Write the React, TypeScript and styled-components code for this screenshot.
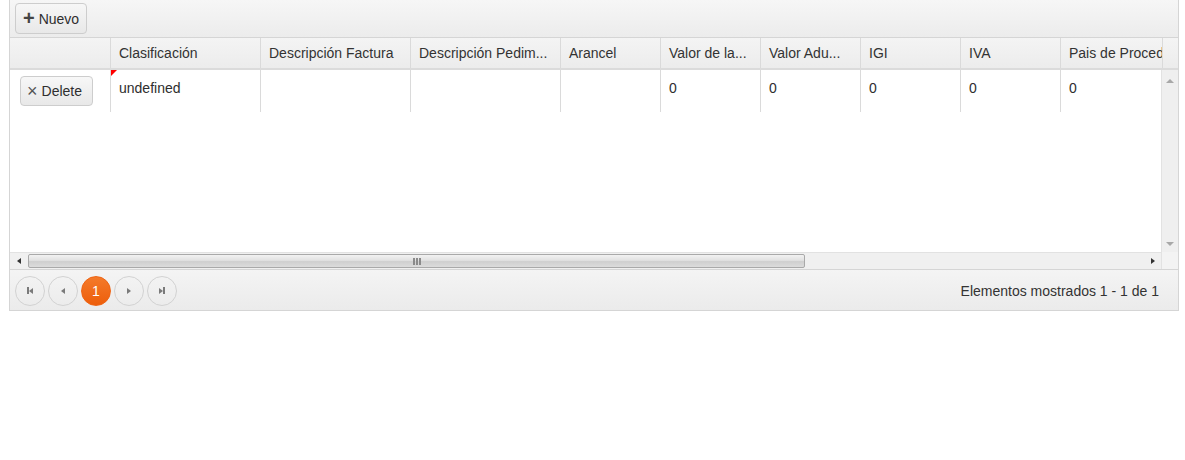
import React from 'react';
import styled, { createGlobalStyle } from 'styled-components';

const GlobalStyle = createGlobalStyle`
  html, body {
    margin: 0;
    padding: 0;
    background: #fff;
    font-family: "Liberation Sans", Arial, sans-serif;
    font-size: 14px;
    color: #2e2e2e;
  }
`;

type Column = { title: string; width: number; field?: string };

const columns: Column[] = [
  { title: '', width: 100 },
  { title: 'Clasificación', width: 150, field: 'clasificacion' },
  { title: 'Descripción Factura', width: 150, field: 'descFactura' },
  { title: 'Descripción Pedim...', width: 150, field: 'descPedimento' },
  { title: 'Arancel', width: 100, field: 'arancel' },
  { title: 'Valor de la...', width: 100, field: 'valorFactura' },
  { title: 'Valor Adu...', width: 100, field: 'valorAduana' },
  { title: 'IGI', width: 100, field: 'igi' },
  { title: 'IVA', width: 100, field: 'iva' },
  { title: 'Pais de Procedencia', width: 150, field: 'pais' },
];

const rows: Record<string, string>[] = [
  {
    clasificacion: 'undefined',
    descFactura: '',
    descPedimento: '',
    arancel: '',
    valorFactura: '0',
    valorAduana: '0',
    igi: '0',
    iva: '0',
    pais: '0',
  },
];

const App = () => {
  return (
    <Page>
      <GlobalStyle />
      <Grid>
        <Toolbar>
          <Button>
            <Plus>+</Plus> Nuevo
          </Button>
        </Toolbar>

        <HeaderWrap>
          <HeaderRow>
            {columns.map((c, i) => (
              <HeaderCell key={i} $width={c.width}>
                {c.title}
              </HeaderCell>
            ))}
          </HeaderRow>
          <HeaderGutter />
        </HeaderWrap>

        <ContentArea>
          <ContentMain>
            <Rows>
              {rows.map((r, ri) => (
                <Row key={ri}>
                  {columns.map((c, i) =>
                    i === 0 ? (
                      <CommandCell key={i} $width={c.width}>
                        <Button $small>
                          <Cross>×</Cross> Delete
                        </Button>
                      </CommandCell>
                    ) : (
                      <Cell key={i} $width={c.width} $dirty={c.field === 'clasificacion'}>
                        {r[c.field!]}
                      </Cell>
                    )
                  )}
                </Row>
              ))}
            </Rows>
            <HScroll>
              <ArrowBtn>
                <Tri $dir="left" />
              </ArrowBtn>
              <HTrack>
                <HThumb>
                  <Grip>
                    <i />
                    <i />
                    <i />
                  </Grip>
                </HThumb>
              </HTrack>
              <ArrowBtn>
                <Tri $dir="right" />
              </ArrowBtn>
            </HScroll>
          </ContentMain>
          <VScroll>
            <VArrow>
              <Tri $dir="up" />
            </VArrow>
            <VArrow>
              <Tri $dir="down" />
            </VArrow>
            <Corner />
          </VScroll>
        </ContentArea>

        <Pager>
          <PagerNav>
            <PageBtn aria-label="first">
              <Bar />
              <Tri $dir="left" $small />
            </PageBtn>
            <PageBtn aria-label="prev">
              <Tri $dir="left" $small />
            </PageBtn>
            <PageBtn $active>1</PageBtn>
            <PageBtn aria-label="next">
              <Tri $dir="right" $small />
            </PageBtn>
            <PageBtn aria-label="last">
              <Tri $dir="right" $small />
              <Bar />
            </PageBtn>
          </PagerNav>
          <PagerInfo>Elementos mostrados 1 - 1 de 1</PagerInfo>
        </Pager>
      </Grid>
    </Page>
  );
};

const Page = styled.div`
  padding: 0 6px 0 9px;
`;

const Grid = styled.div`
  width: 1170px;
  box-sizing: border-box;
  border: 1px solid #d5d5d5;
  border-top: none;
  background: #fff;
`;

const Toolbar = styled.div`
  height: 38px;
  box-sizing: border-box;
  padding: 3px 5px;
  background: linear-gradient(#f6f6f6, #ececec);
  border-bottom: 1px solid #d5d5d5;
  display: flex;
  align-items: flex-start;
`;

const Button = styled.button<{ $small?: boolean }>`
  height: 31px;
  padding: 0 7px;
  box-sizing: border-box;
  border: 1px solid #cdcdcd;
  border-radius: 4px;
  background: linear-gradient(#f7f7f7, #e8e8e8);
  font-family: "Liberation Sans", Arial, sans-serif;
  font-size: 14px;
  color: #2e2e2e;
  display: inline-flex;
  align-items: center;
  gap: 4px;
  cursor: pointer;
  ${(p) => (p.$small ? 'width: 73px; height: 30px; padding: 0 6px;' : 'width: 72px;')}
`;

const Plus = styled.span`
  font-size: 20px;
  font-weight: bold;
  line-height: 1;
  margin-top: -2px;
  color: #444;
`;

const Cross = styled.span`
  font-size: 18px;
  line-height: 1;
  color: #555;
  margin-top: -1px;
`;

const HeaderWrap = styled.div`
  display: flex;
  height: 32px;
  box-sizing: border-box;
  border-bottom: 2px solid #dbdbdb;
  background: linear-gradient(#f4f4f4, #ececec);
  overflow: hidden;
`;

const HeaderRow = styled.div`
  flex: 1;
  display: flex;
  overflow: hidden;
`;

const HeaderGutter = styled.div`
  width: 15px;
  flex: none;
  border-left: 1px solid #dadada;
`;

const HeaderCell = styled.div<{ $width: number }>`
  flex: none;
  width: ${(p) => p.$width}px;
  box-sizing: border-box;
  padding: 0 8px;
  line-height: 30px;
  white-space: nowrap;
  overflow: hidden;
  border-left: 1px solid #dadada;
  color: #333;
  &:first-child {
    border-left: none;
  }
`;

const ContentArea = styled.div`
  display: flex;
  height: 199px;
`;

const ContentMain = styled.div`
  flex: 1;
  min-width: 0;
  display: flex;
  flex-direction: column;
`;

const Rows = styled.div`
  flex: 1;
  overflow: hidden;
`;

const Row = styled.div`
  display: flex;
  height: 42px;
`;

const Cell = styled.div<{ $width: number; $dirty?: boolean }>`
  flex: none;
  position: relative;
  width: ${(p) => p.$width}px;
  box-sizing: border-box;
  padding: 10px 8px 0;
  white-space: nowrap;
  overflow: hidden;
  border-left: 1px solid #dadada;
  ${(p) =>
    p.$dirty &&
    `
    &::before {
      content: '';
      position: absolute;
      left: 0;
      top: 0;
      border-style: solid;
      border-width: 6px 6px 0 0;
      border-color: #f00 transparent transparent transparent;
    }
  `}
`;

const CommandCell = styled.div<{ $width: number }>`
  flex: none;
  width: ${(p) => p.$width}px;
  box-sizing: border-box;
  padding: 6px 0 0 10px;
`;

const HScroll = styled.div`
  height: 17px;
  box-sizing: border-box;
  display: flex;
  align-items: center;
  background: #f0f0f0;
  border-top: 1px solid #e2e2e2;
`;

const ArrowBtn = styled.div`
  width: 17px;
  height: 16px;
  flex: none;
  display: flex;
  align-items: center;
  justify-content: center;
`;

const HTrack = styled.div`
  flex: 1;
  height: 16px;
  display: flex;
  align-items: center;
`;

const HThumb = styled.div`
  margin-left: 1px;
  width: 777px;
  height: 14px;
  box-sizing: border-box;
  border: 1px solid #a9a9a9;
  border-radius: 2px;
  background: linear-gradient(#f2f2f2, #e1e1e1 45%, #cfcfcf 55%, #dcdcdc);
  display: flex;
  align-items: center;
  justify-content: center;
`;

const Grip = styled.div`
  display: flex;
  gap: 1px;
  i {
    width: 2px;
    height: 7px;
    background: #8a8a8a;
  }
`;

const VScroll = styled.div`
  width: 16px;
  flex: none;
  display: flex;
  flex-direction: column;
  background: #efefef;
  border-left: 1px solid #e2e2e2;
`;

const VArrow = styled.div`
  height: 17px;
  display: flex;
  align-items: center;
  justify-content: center;
  &:first-child {
    flex: none;
    padding-top: 2px;
  }
  &:nth-child(2) {
    margin-top: auto;
  }
`;

const Corner = styled.div`
  height: 17px;
  background: #f3f3f3;
`;

const Tri = styled.span<{ $dir: 'left' | 'right' | 'up' | 'down'; $small?: boolean }>`
  display: inline-block;
  width: 0;
  height: 0;
  border-style: solid;
  ${(p) => {
    const c = p.$small ? '#7a7a7a' : '#333';
    switch (p.$dir) {
      case 'left':
        return `border-width: 3px 4px 3px 0; border-color: transparent ${c} transparent transparent;`;
      case 'right':
        return `border-width: 3px 0 3px 4px; border-color: transparent transparent transparent ${c};`;
      case 'up':
        return `border-width: 0 4px 4px 4px; border-color: transparent transparent #a8a8a8 transparent;`;
      default:
        return `border-width: 4px 4px 0 4px; border-color: #a8a8a8 transparent transparent transparent;`;
    }
  }}
`;

const Bar = styled.span`
  display: inline-block;
  width: 2px;
  height: 7px;
  background: #7a7a7a;
`;

const Pager = styled.div`
  height: 41px;
  box-sizing: border-box;
  display: flex;
  align-items: center;
  justify-content: space-between;
  padding: 0 19px 0 5px;
  background: linear-gradient(#f4f4f4, #ebebeb);
  border-top: 1px solid #d5d5d5;
`;

const PagerNav = styled.div`
  display: flex;
  gap: 3px;
  padding-top: 1px;
`;

const PageBtn = styled.button<{ $active?: boolean }>`
  width: 30px;
  height: 30px;
  padding: 0;
  box-sizing: border-box;
  border-radius: 50%;
  border: 1px solid ${(p) => (p.$active ? '#ef6414' : '#d2d2d2')};
  background: ${(p) => (p.$active ? 'linear-gradient(#f47a2a, #ed5e0b)' : 'transparent')};
  color: #fff;
  font-family: "Liberation Sans", Arial, sans-serif;
  font-size: 14px;
  display: flex;
  align-items: center;
  justify-content: center;
  gap: 0;
`;

const PagerInfo = styled.div`
  color: #333;
  padding-top: 1px;
`;

export default App;
